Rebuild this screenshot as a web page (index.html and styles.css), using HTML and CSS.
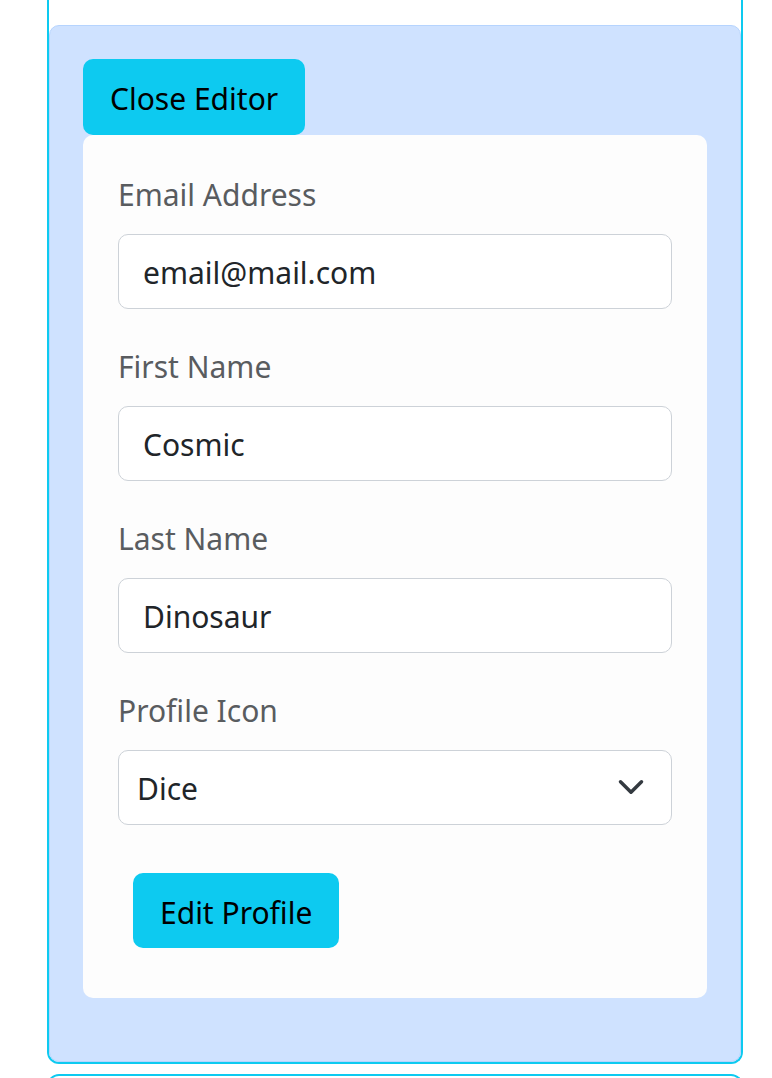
FILE: index.html
```html
<!DOCTYPE html>
<html lang="en">
<head>
<meta charset="utf-8">
<title>Profile Editor</title>
<link rel="stylesheet" href="styles.css">
</head>
<body>
<div class="panel">
  <div class="editor">
    <button class="btn" type="button">Close Editor</button>
    <form class="card">
      <div class="group">
        <label class="label" for="email">Email Address</label>
        <input class="field" id="email" type="email" value="email@mail.com">
      </div>
      <div class="group">
        <label class="label" for="first">First Name</label>
        <input class="field" id="first" type="text" value="Cosmic">
      </div>
      <div class="group">
        <label class="label" for="last">Last Name</label>
        <input class="field" id="last" type="text" value="Dinosaur">
      </div>
      <div class="group">
        <label class="label" for="icon">Profile Icon</label>
        <div class="select-wrap">
          <select class="field select" id="icon">
            <option>Dice</option>
          </select>
          <svg class="chevron" viewBox="0 0 16 16" width="28" height="28" aria-hidden="true"><path d="M2 5l6 6 6-6" fill="none" stroke="#343a40" stroke-width="2" stroke-linecap="round" stroke-linejoin="round"/></svg>
        </div>
      </div>
      <button class="btn btn-submit" type="button">Edit Profile</button>
    </form>
  </div>
</div>
<div class="panel next"></div>
</body>
</html>
```

FILE: styles.css
```css
* { box-sizing: border-box; }

html, body {
  margin: 0;
  padding: 0;
  background: #ffffff;
  height: 1078px;
  overflow: hidden;
}

body {
  font-family: "Noto Sans", "Open Sans", sans-serif;
  color: #212529;
  padding-left: 47px;
}

.panel {
  width: 696px;
  border: 2px solid #0dcaf0;
  border-top: none;
  border-radius: 0 0 12px 12px;
  padding-top: 25px;
  background: #ffffff;
}

.panel.next {
  margin-top: 10px;
  border-top: 2px solid #0dcaf0;
  border-bottom: none;
  border-radius: 12px 12px 0 0;
  padding-top: 0;
  height: 40px;
}

.editor {
  background: #cfe2ff;
  border: 1px solid #b6d4fe;
  border-radius: 10px;
  padding: 33px 33px 63px 33px;
  display: flex;
  flex-direction: column;
  align-items: flex-start;
}

.btn {
  font-family: inherit;
  font-size: 30px;
  color: #000000;
  background: #0dcaf0;
  border: none;
  border-radius: 10px;
  height: 76px;
  padding: 4px 27px 0 27px;
  line-height: 72px;
  cursor: pointer;
}

.btn-submit {
  height: 75px;
  line-height: 71px;
  margin: 15px;
}

.card {
  align-self: stretch;
  background: #fdfdfd;
  border-radius: 10px;
  padding: 35px;
  display: flex;
  flex-direction: column;
  align-items: flex-start;
}

.group {
  align-self: stretch;
  display: flex;
  flex-direction: column;
  margin-bottom: 33px;
}

.label {
  font-size: 30px;
  line-height: 48px;
  color: #595c5f;
  padding-top: 1px;
  margin-bottom: 15px;
}

.field {
  width: 554px;
  height: 75px;
  font-family: inherit;
  font-size: 30px;
  color: #212529;
  background: #ffffff;
  border: 1.5px solid #cdd2d8;
  border-radius: 10px;
  padding: 1px 24px 0 24px;
  outline: none;
}

.select-wrap {
  position: relative;
  width: 554px;
}

.select {
  appearance: none;
  -webkit-appearance: none;
  padding: 1px 70px 0 18px;
}

.chevron {
  position: absolute;
  right: 27px;
  top: 23px;
  width: 28px;
  height: 28px;
  pointer-events: none;
}
```
